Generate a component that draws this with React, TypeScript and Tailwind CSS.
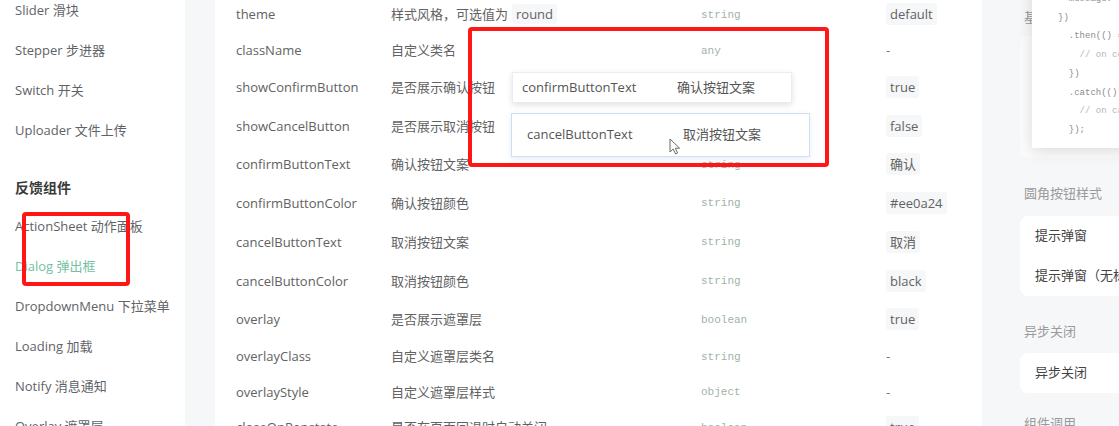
import React from 'react';

const sans = "font-['Open_Sans','Noto_Sans_CJK_SC',sans-serif]";

const navTop = [
  { label: 'Slider 滑块' },
  { label: 'Stepper 步进器' },
  { label: 'Switch 开关' },
  { label: 'Uploader 文件上传' },
];

const navFeedback = [
  { label: 'ActionSheet 动作面板' },
  { label: 'Dialog 弹出框', active: true },
  { label: 'DropdownMenu 下拉菜单' },
  { label: 'Loading 加载' },
  { label: 'Notify 消息通知' },
  { label: 'Overlay 遮罩层' },
];

type Row = {
  name: string;
  desc: string;
  code?: string;
  type: string;
  def: string;
  badge: boolean;
  h: string;
};

const rows: Row[] = [
  { name: 'theme', desc: '样式风格，可选值为', code: 'round', type: 'string', def: 'default', badge: true, h: 'h-[36px]' },
  { name: 'className', desc: '自定义类名', type: 'any', def: '-', badge: false, h: 'h-[36px]' },
  { name: 'showConfirmButton', desc: '是否展示确认按钮', type: 'boolean', def: 'true', badge: true, h: 'h-[38px]' },
  { name: 'showCancelButton', desc: '是否展示取消按钮', type: 'boolean', def: 'false', badge: true, h: 'h-[39px]' },
  { name: 'confirmButtonText', desc: '确认按钮文案', type: 'string', def: '确认', badge: true, h: 'h-[38px]' },
  { name: 'confirmButtonColor', desc: '确认按钮颜色', type: 'string', def: '#ee0a24', badge: true, h: 'h-[39px]' },
  { name: 'cancelButtonText', desc: '取消按钮文案', type: 'string', def: '取消', badge: true, h: 'h-[39px]' },
  { name: 'cancelButtonColor', desc: '取消按钮颜色', type: 'string', def: 'black', badge: true, h: 'h-[39px]' },
  { name: 'overlay', desc: '是否展示遮罩层', type: 'boolean', def: 'true', badge: true, h: 'h-[38px]' },
  { name: 'overlayClass', desc: '自定义遮罩层类名', type: 'string', def: '-', badge: false, h: 'h-[36px]' },
  { name: 'overlayStyle', desc: '自定义遮罩层样式', type: 'object', def: '-', badge: false, h: 'h-[35px]' },
  { name: 'closeOnPopstate', desc: '是否在页面回退时自动关闭', type: 'boolean', def: 'true', badge: true, h: 'h-[36px]' },
];

function Sidebar() {
  return (
    <aside className="w-[185px] shrink-0 bg-white pl-[15px] text-[13px] text-[#5f6368]">
      <div className="-mt-[9px] flex flex-col">
        {navTop.map((n) => (
          <div key={n.label} className="flex h-[40px] items-center">{n.label}</div>
        ))}
        <div className="mt-[16px] flex h-[40px] items-center text-[14px] font-semibold text-[#3a3a3a]">反馈组件</div>
        {navFeedback.map((n) => (
          <div
            key={n.label}
            className={n.active ? 'flex h-[40px] items-center text-[#74c1a3]' : 'flex h-[40px] items-center'}
          >
            {n.label}
          </div>
        ))}
      </div>
    </aside>
  );
}

function PropsTable() {
  return (
    <div className="ml-[30px] w-[767px] shrink-0 bg-white pl-[21px] text-[13px] text-[#626262]">
      <div className="-mt-[3px] flex flex-col">
        {rows.map((r) => (
          <div key={r.name} className={`${r.h} flex items-center`}>
            <div className="w-[155px] shrink-0">{r.name}</div>
            <div className="w-[310px] shrink-0">
              {r.desc}
              {r.code && (
                <span className="ml-[4px] rounded-[3px] bg-[#f6f7f8] px-[4px] py-[1px]">{r.code}</span>
              )}
            </div>
            <div className="w-[185px] shrink-0 font-['Liberation_Mono',monospace] text-[11px] text-[#9fb3a9]">
              {r.type}
            </div>
            <div>
              {r.badge ? (
                <span className="rounded-[3px] bg-[#f6f7f8] px-[4px] py-[2px]">{r.def}</span>
              ) : (
                <span className="text-[#777]">{r.def}</span>
              )}
            </div>
          </div>
        ))}
      </div>
    </div>
  );
}

function DemoPanel() {
  return (
    <div className="relative flex-1 pl-[38px] text-[13px]">
      <div className="flex h-[36px] items-center pl-[4px] text-[#9a9a9a]">基础用法</div>
      <div className="h-[122px] rounded-l-[8px] bg-[#fbfbfb]"></div>
      <div className="mt-[18px] flex h-[36px] items-center whitespace-nowrap pl-[4px] text-[#9a9a9a]">圆角按钮样式</div>
      <div className="mt-[4px] flex flex-col rounded-l-[8px] bg-white px-[15px] text-[#444]">
        <div className="flex h-[40px] items-center whitespace-nowrap">提示弹窗</div>
        <div className="flex h-[40px] items-center whitespace-nowrap">提示弹窗（无标题）</div>
      </div>
      <div className="mt-[18px] flex h-[36px] items-center pl-[4px] text-[#9a9a9a]">异步关闭</div>
      <div className="mt-[3px] flex h-[40px] items-center rounded-l-[8px] bg-white px-[15px] text-[#444]">异步关闭</div>
      <div className="mt-[13px] flex h-[36px] items-center pl-[4px] text-[#9a9a9a]">组件调用</div>
    </div>
  );
}

function CodePopup() {
  const lines: { t: string; c?: boolean }[] = [
    { t: '  message: ' },
    { t: '})' },
    { t: '  .then(() => {' },
    { t: '    // on confirm', c: true },
    { t: '  })' },
    { t: '  .catch(() => {' },
    { t: '    // on cancel', c: true },
    { t: '  });' },
  ];
  return (
    <div className="absolute left-[1032px] top-[-20px] h-[168px] w-[110px] overflow-hidden bg-white pl-[26px] pt-[10px] shadow-[0_3px_14px_rgba(0,0,0,0.13)]">
      <pre className="font-['Liberation_Mono',monospace] text-[9px] leading-[18.7px] text-[#8b8b8b]">
        {lines.map((l, i) => (
          <div key={i} className={l.c ? 'text-[#b5b5b5]' : ''}>
            {l.t}
          </div>
        ))}
      </pre>
    </div>
  );
}

function Cursor() {
  return (
    <svg className="absolute left-[669px] top-[138px]" width="12" height="17" viewBox="0 0 12 17">
      <path d="M1 1 L1 14 L4.2 11 L6.6 16 L8.6 15 L6.3 10.2 L10.6 10.2 Z" fill="#fff" stroke="#6b6b6b" strokeWidth="1" strokeLinejoin="round" />
    </svg>
  );
}

export default function App() {
  return (
    <div className={`relative flex h-[426px] w-[1119px] overflow-hidden bg-[#f6f7f9] ${sans}`}>
      <Sidebar />
      <PropsTable />
      <DemoPanel />
      <CodePopup />

      {/* annotations over the page */}
      <div className="absolute left-[22px] top-[212px] h-[74px] w-[108px] rounded-[4px] border-[4px] border-[#ff1717]"></div>
      <div className="absolute left-[468px] top-[27px] h-[140px] w-[361px] rounded-[4px] border-[4px] border-[#ff1717]"></div>

      <div className="absolute left-[512px] top-[72px] flex h-[31px] w-[280px] items-center border border-[#ececec] bg-white pl-[9px] text-[13px] text-[#555] shadow-[0_2px_6px_rgba(0,0,0,0.12)]">
        <span className="w-[155px] shrink-0">confirmButtonText</span>
        <span>确认按钮文案</span>
      </div>
      <div className="absolute left-[511px] top-[113px] flex h-[44px] w-[299px] items-center border border-[#cddff3] bg-white pl-[15px] text-[13px] text-[#555] shadow-[0_2px_6px_rgba(120,150,200,0.18)]">
        <span className="w-[156px] shrink-0">cancelButtonText</span>
        <span>取消按钮文案</span>
      </div>
      <Cursor />
    </div>
  );
}
